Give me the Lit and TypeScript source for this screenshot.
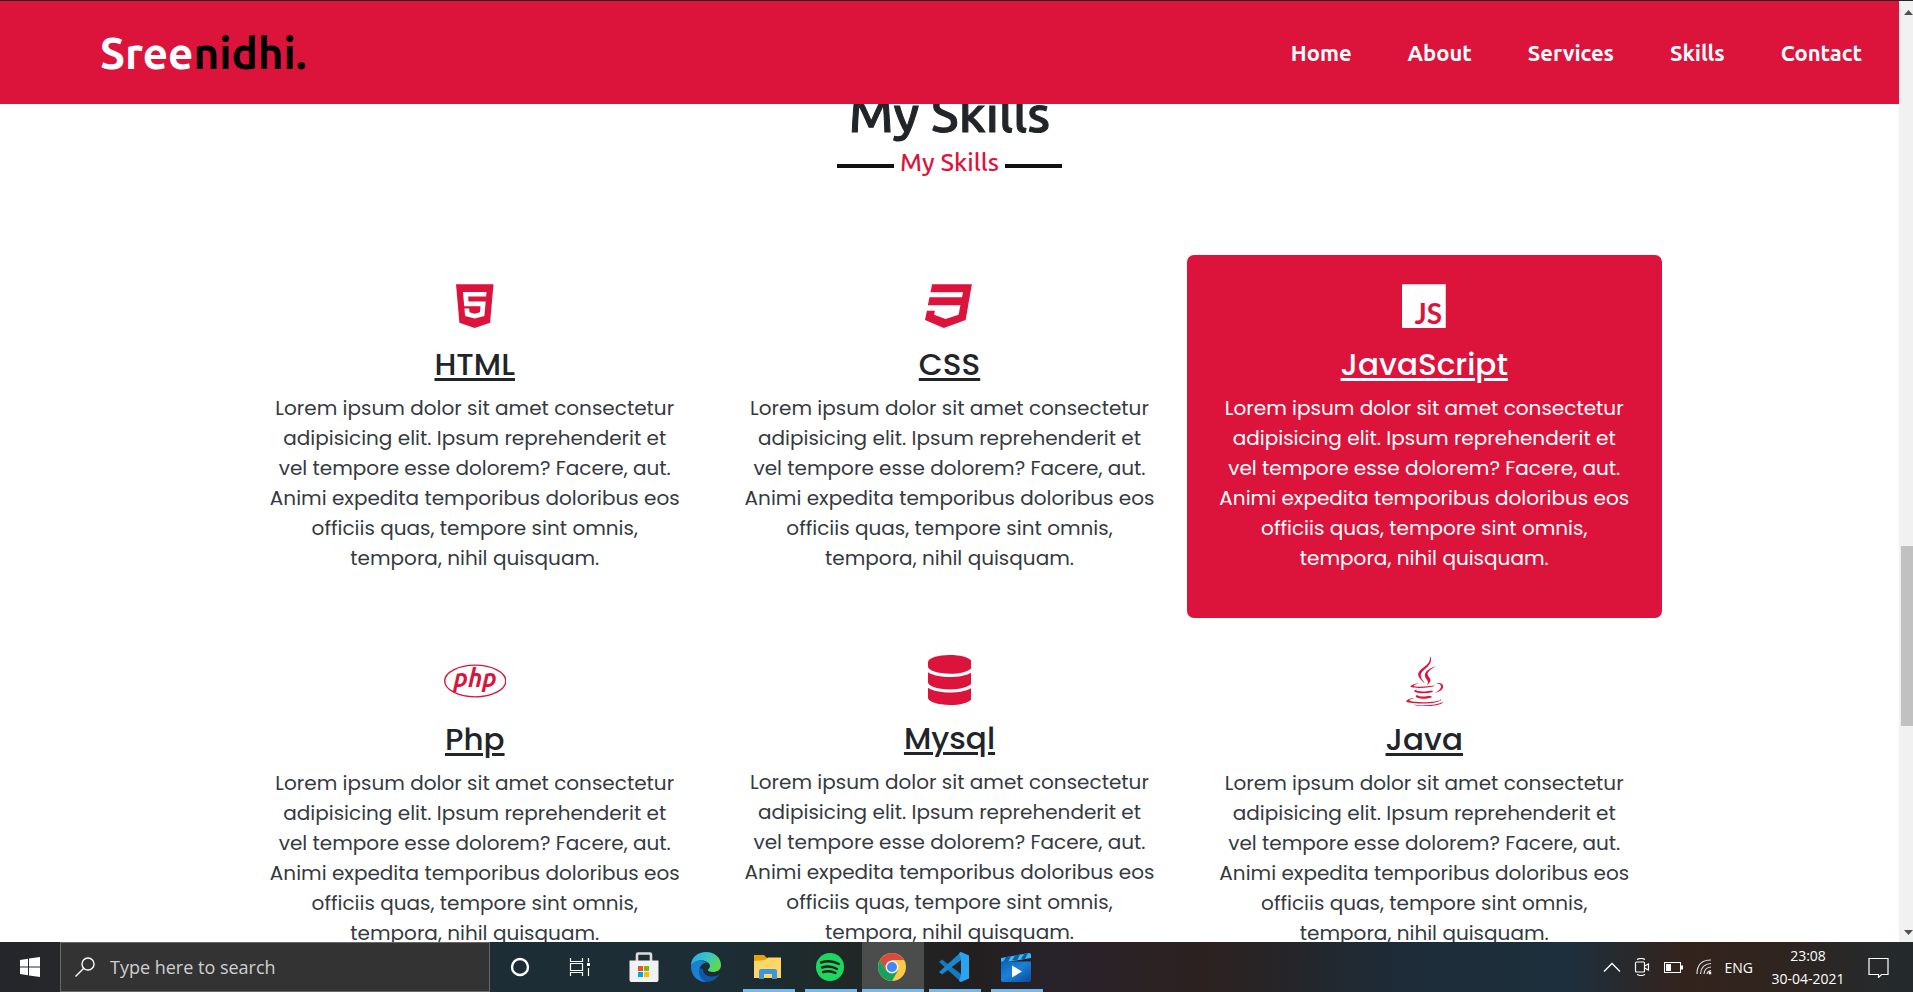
import { LitElement, html, svg, css, nothing, TemplateResult } from "lit";
import { customElement, property } from "lit/decorators.js";
import { classMap } from "lit/directives/class-map.js";

const skillIcons: Record<string, TemplateResult> = {
  html: html`<svg viewBox="0 0 384 512" height="50" aria-hidden="true"><path fill="currentColor" d="M0 32l34.9 395.8L191.5 480l157.6-52.2L384 32H0zm308.2 127.9H124.4l4.1 49.4h175.6l-13.6 148.4-97.9 27v.3h-1.1l-98.7-27.3-6-75.8h47.7L138 320l53.5 14.5 53.7-14.5 6-62.2H84.3L71.5 112.2h241.1l-4.4 47.7z"/></svg>`,
  css: html`<svg viewBox="0 0 512 512" height="50" aria-hidden="true"><path fill="currentColor" d="M480 32l-64 368-223.3 80L0 400l19.6-94.8h82l-8 40.6L210 390.2l134.1-44.4 18.8-97.1H29.5l16-82h333.7l10.5-52.7H56.3l16.3-82H480z"/></svg>`,
  js: html`<svg viewBox="0 0 448 512" height="50" aria-hidden="true"><path fill="currentColor" d="M0 32h448v448H0z"/><text x="270" y="442" text-anchor="middle" font-family="Lato, sans-serif" font-weight="700" font-size="286" fill="#dc143c">JS</text></svg>`,
  php: html`<svg viewBox="0 0 640 512" height="50" aria-hidden="true"><ellipse cx="320" cy="256" rx="313" ry="162" fill="none" stroke="currentColor" stroke-width="14"/><text x="318" y="318" text-anchor="middle" font-family="Ubuntu, sans-serif" font-weight="700" font-style="italic" font-size="256" fill="currentColor">php</text></svg>`,
  db: html`<svg viewBox="0 0 448 512" height="50" aria-hidden="true"><path fill="currentColor" d="M448 73.143v45.714C448 159.143 347.667 192 224 192S0 159.143 0 118.857V73.143C0 32.857 100.333 0 224 0s224 32.857 224 73.143zM448 176v102.857C448 319.143 347.667 352 224 352S0 319.143 0 278.857V176c48.125 33.143 136.208 48.572 224 48.572S399.874 209.143 448 176zm0 160v102.857C448 479.143 347.667 512 224 512S0 479.143 0 438.857V336c48.125 33.143 136.208 48.572 224 48.572S399.874 369.143 448 336z"/></svg>`,
  java: html`<svg viewBox="0 0 384 512" height="50" aria-hidden="true"><path fill="currentColor" d="M277.74 312.9c9.8-6.7 23.4-12.5 23.4-12.5s-38.7 7-77.2 10.2c-47.1 3.9-97.7 4.7-123.1 1.3-60.1-8 33-30.1 33-30.1s-36.1-2.4-80.6 19c-52.5 25.4 130 37 224.5 12.1zm-85.4-32.1c-19-42.7-83.1-80.2 0-145.8C296 53.2 242.84 0 242.84 0c21.5 84.5-75.6 110.1-110.7 162.6-23.9 35.9 11.7 74.4 60.2 118.2zm114.6-176.2c.1 0-175.2 43.8-91.5 140.2 24.7 28.4-6.5 54-6.5 54s62.7-32.4 33.9-72.9c-26.9-37.8-47.5-56.6 64.1-121.3zm-6.1 270.5a12.19 12.19 0 0 1-2 2.6c128.3-33.7 81.1-118.9 19.8-97.3a17.33 17.33 0 0 0-8.2 6.3 70.45 70.45 0 0 1 11-3c31-6.5 75.5 41.5-20.6 91.4zM348 437.4s14.5 11.9-15.9 21.2c-57.9 17.5-240.8 22.8-291.6.7-18.3-7.9 16-19 26.8-21.3 11.2-2.4 17.7-2 17.7-2-20.3-14.3-131.3 28.1-56.4 40.2C232.84 509.4 401 461.3 348 437.4zM124.44 396c-78.7 22 47.9 67.4 148.1 24.5a185.89 185.89 0 0 1-28.2-13.8c-44.7 8.5-65.4 9.1-106 4.5-33.5-3.8-13.9-15.2-13.9-15.2zm179.8 97.2c-78.7 14.8-175.8 13.1-233.3 3.6 0-.1 11.8 9.7 72.4 13.6 92.2 5.9 233.8-3.3 237.1-46.9 0 0-6.4 16.5-76.2 29.7zM260.64 353c-59.2 11.4-93.5 11.1-136.8 6.6-33.5-3.5-11.6-19.7-11.6-19.7-86.8 28.8 48.2 61.4 169.5 25.9a60.37 60.37 0 0 1-21.1-12.8z"/></svg>`,
};

const skills = [
  { icon: "html", name: "HTML", brand: true },
  { icon: "css", name: "CSS", brand: true },
  { icon: "js", name: "JavaScript", brand: true, active: true },
  { icon: "php", name: "Php", brand: true },
  { icon: "db", name: "Mysql" },
  { icon: "java", name: "Java", brand: true },
];

const blurb = [
  "Lorem ipsum dolor sit amet consectetur",
  "adipisicing elit. Ipsum reprehenderit et",
  "vel tempore esse dolorem? Facere, aut.",
  "Animi expedita temporibus doloribus eos",
  "officiis quas, tempore sint omnis,",
  "tempora, nihil quisquam.",
];

@customElement("skill-card")
class SkillCard extends LitElement {
  @property() icon = "";
  @property() name = "";
  @property({ type: Boolean }) brand = false;
  @property({ type: Boolean }) active = false;

  static styles = css`
    :host { display: block; }
    .card {
      padding: 25px 20px 45px;
      border-radius: 7px;
      text-align: center;
      color: #212529;
      font-family: Poppins, Inter, sans-serif;
    }
    .icon { display: flex; justify-content: center; color: #dc143c; }
    .brand { padding-top: 1px; }
    h3 {
      margin: 14px 0 10px;
      font-size: 31px;
      line-height: 38px;
      font-weight: 500;
      text-decoration: underline;
      text-decoration-thickness: 3px;
      text-underline-offset: 3px;
    }
    p { margin: 0; color: #343a40; font-size: 20px; line-height: 30px; font-weight: 400; white-space: nowrap; }
    .active { background: #dc143c; color: #fff; }
    .active .icon, .active p { color: #fff; }
  `;

  render() {
    return html`<article class=${classMap({ card: true, active: this.active })}>
      <div class=${classMap({ icon: true, brand: this.brand })}>${skillIcons[this.icon]}</div>
      <h3>${this.name}</h3>
      <p>${blurb.map((line, i) => html`${i ? html`<br>` : nothing}${line}`)}</p>
    </article>`;
  }
}

const apps = [
  { label: "Cortana", art: svg`<circle cx="14" cy="15" r="8" fill="none" stroke="#fff" stroke-width="2.4"/>` },
  { label: "Task View", art: svg`<path d="M2.500 6v3.500h12V6M2.500 24v-3.500h12V24M2.500 11.500h12v7h-12zM20.500 6v4M20.500 16v8" fill="none" stroke="#fff" stroke-width="1.200"/><path d="M19 11h3v3h-3z" fill="#fff"/>` },
  { label: "Microsoft Store", art: svg`<path d="M7 9V2.500Q7 1.500 8 1.500H20Q21 1.500 21 2.500V9" fill="none" stroke="#ddd" stroke-width="2.600"/><path d="M-0.500 8.500H28.500V28Q28.500 30 26.500 30H1.500Q-0.500 30 -0.500 28Z" fill="#f2f2f2"/><path d="M8 14h5v5h-5z" fill="#f25022"/><path d="M14 14h5v5h-5z" fill="#7fba00"/><path d="M8 20h5v5h-5z" fill="#00a4ef"/><path d="M14 20h5v5h-5z" fill="#ffb900"/>` },
  { label: "Edge", art: svg`<defs><linearGradient id="eg" x1="0" y1="0" x2="1" y2="0.500"><stop offset="0" stop-color="#2aa8e0"/><stop offset="0.500" stop-color="#36c3d0"/><stop offset="1" stop-color="#5fda4f"/></linearGradient></defs><g transform="translate(-1 0)"><path d="M0 14A15 15 0 0 0 15 30C21 30 26 27 28.500 22Q26 24.500 21 24.500C16 24.500 12 22 12 17Z" fill="#0f58a8"/><path d="M0 14C0 5 7 0 15 0c9 0 15 6 15 13 0 5-4 7-8 7-3 0-5-1-5-2 0-1 2-1.500 2-4 0-3-4-5.500-8-5.500C5 8.500 1 11 0 14Z" fill="url(#eg)"/><path d="M0 14c1-3 4-5.500 9-5.500 3 0 5 1 7 2-4 0-8 4-8 9 0 5 3 9 7 10.500C6 30 0 23 0 14Z" fill="#1b7fd4"/></g>` },
  { label: "File Explorer", open: true, art: svg`<path d="M0 3h10l3 3v8H0z" fill="#e8a00c"/><path d="M0 9l11-1 3-2.500h13V26H0z" fill="#ffd666"/><path d="M5 27V19q0-2 2-2H21q2 0 2 2v8H18V22H10v5z" fill="#3c96dc"/>` },
  { label: "Spotify", open: true, art: svg`<g transform="translate(-1 0)"><circle cx="15" cy="15" r="14" fill="#1ed760"/><path d="M6 10.500Q15.500 7.500 24 12M7 15.500Q15 13 22 17M8 20Q15 18 20.500 21" fill="none" stroke="#17241d" stroke-width="2.400" stroke-linecap="round"/></g>` },
  { label: "Chrome", open: true, active: true, art: svg`<g transform="translate(-1 0)"><circle cx="15" cy="15" r="14" fill="#fbc943"/><path d="M2.900 8A14 14 0 0 1 27.100 8H15L9 18.500Z" fill="#db4a3f"/><path d="M2.900 8A14 14 0 0 0 15 29L21 18.500L9 18.500Z" fill="#18a05f"/><circle cx="15" cy="15" r="6.500" fill="#f1f1f1"/><circle cx="15" cy="15" r="5" fill="#4688f1"/></g>` },
  { label: "Visual Studio Code", open: true, art: svg`<g transform="translate(-1 0)"><path d="M0 10l3-2.500 19 14.500v8z" fill="#1479bd"/><path d="M0 20l3 2.500L22 8V0z" fill="#1b86ce"/><path d="M22 0l8 3.500v23L22 30l-2-1 2-6V7l-2-6z" fill="#2ba3ee"/></g>` },
  { label: "Movies and TV", open: true, art: svg`<defs><linearGradient id="mv" x1="0" y1="0" x2="1" y2="1"><stop offset="0" stop-color="#0f5fb8"/><stop offset="0.450" stop-color="#1b82d8"/><stop offset="1" stop-color="#0a4a9a"/></linearGradient></defs><g transform="translate(-1 0)"><path d="M0 6L28 1q2 0 2 2v3L0 11z" fill="#38bdf0"/><path d="M5 5l5-1-3 6H2zM14 3.500l5-1-3 6h-5zM23 2l4-1-3 6h-4z" fill="#125ea8"/><path d="M0 9.500H30V28q0 2-2 2H2q-2 0-2-2z" fill="url(#mv)"/><path d="M11 13.500v12l10-6z" fill="#fff"/></g>` },
];

@customElement("task-bar")
class TaskBar extends LitElement {
  static styles = css`
    :host { display: block; font-family: "Segoe UI", "Open Sans", sans-serif; color: #fff; }
    .bar {
      display: flex;
      height: 50px;
      background: linear-gradient(90deg, #24262b 0, #27272a 4%, #1c2d35 25%, #1c2d35 38%, #1f2927 44%, #231f1f 51%, #28222b 55%, #2c211f 63%, #24262b 68%, #1d2c38 73%, #1d2f3c 82%, #33231c 88%, #2f241f 93%, #262a2b 98%, #24292b 100%);
    }
    button { margin: 0; padding: 0; border: 0; background: none; color: inherit; font: inherit; }
    .start { display: grid; place-items: center; width: 60px; }
    .search {
      box-sizing: border-box;
      display: flex;
      align-items: center;
      gap: 15px;
      width: 430px;
      padding-left: 14px;
      border: 1px solid #686868;
      background: #333;
    }
    .search input { flex: 1; min-width: 0; border: 0; padding: 0; outline: 0; background: none; color: #fff; font: inherit; font-size: 18px; }
    .search input::placeholder { color: #cfcfcf; opacity: 1; }
    .apps { display: flex; }
    .app { position: relative; display: grid; place-items: center; width: 62px; }
    .app svg { overflow: visible; }
    .open::after { content: ""; position: absolute; bottom: 0; left: 5px; right: 5px; height: 3px; background: #76b9ed; }
    .current { background: #4b4d4c; }
    .current::after { left: 0; right: 0; }
    .tray { display: flex; align-items: center; gap: 13px; margin-left: auto; padding-right: 24px; font-size: 14px; }
    .tray svg { display: block; }
    .clock { width: 80px; text-align: center; line-height: 23px; margin: 0 7px 0 2px; }
  `;

  render() {
    return html`<footer class="bar">
      <button class="start" aria-label="Start">
        <svg width="20" height="20" viewBox="0 0 20 20"><path fill="#fff" d="M0 3L8 1.800V9.500H0zM9 1.600L20 0V9.500H9zM0 10.500H8V18.200L0 17zM9 10.500H20V20L9 18.400z"/></svg>
      </button>
      <label class="search">
        <svg width="20" height="20" viewBox="0 0 20 20" role="img" aria-label="Search"><circle cx="13" cy="7" r="6" fill="none" stroke="#fff" stroke-width="1.400"/><path d="M8.500 11.500L0.500 19.500" stroke="#fff" stroke-width="1.400"/></svg>
        <input type="text" placeholder="Type here to search">
      </label>
      <div class="apps">
        ${apps.map((a) => html`<button class=${classMap({ app: true, open: !!a.open, current: !!a.active })} aria-label=${a.label}><svg width="30" height="30" viewBox="0 0 30 30">${a.art}</svg></button>`)}
      </div>
      <div class="tray">
        <button aria-label="Show hidden icons"><svg width="18" height="18" viewBox="0 0 18 18"><path d="M1 13.500L9 5.500L17 13.500" fill="none" stroke="#fff" stroke-width="1.300"/></svg></button>
        <button aria-label="Meet now"><svg width="16" height="18" viewBox="0 0 16 18" fill="none" stroke="#fff" stroke-width="1.200"><rect x="1.500" y="4" width="9" height="10" rx="1"/><path d="M10.500 8l4-2v6l-4-2M3 1.500Q7 -0.500 11 1.500M3 16.500Q7 18.500 11 16.500"/></svg></button>
        <button aria-label="Battery"><svg width="20" height="18" viewBox="0 0 20 18"><rect x="1.500" y="4.500" width="16" height="10" fill="none" stroke="#fff"/><path d="M3 6h5v7H3zM18 7.500h2v4h-2z" fill="#fff"/></svg></button>
        <button aria-label="Network"><svg width="16" height="18" viewBox="0 0 16 18" fill="none" stroke="#ddd" stroke-width="1.200"><path d="M1 16Q1 2 15 2M4.500 16Q5 6 15 5.500M8 16Q8.500 9.500 15 9M11 16Q11.500 13 15 12.500"/><circle cx="14" cy="15" r="1.400" fill="#fff" stroke="none"/></svg></button>
        <button>ENG</button>
        <div class="clock"><time>23:08</time><br><time>30-04-2021</time></div>
        <button aria-label="Notifications"><svg width="21" height="21" viewBox="0 0 21 21"><path d="M1 1.500H20V17.500H13.500L10.500 20.500V17.500H1z" fill="none" stroke="#fff" stroke-width="1.200"/></svg></button>
      </div>
    </footer>`;
  }
}

@customElement("app-root")
class AppRoot extends LitElement {
  static styles = css`
    :host {
      display: flex;
      flex-direction: column;
      height: 100vh;
      overflow: hidden;
      background: #fff;
      font-family: Ubuntu, "Noto Sans", sans-serif;
    }
    .window { display: flex; flex: 1; min-height: 0; border-top: 1px solid #262626; }
    .page { display: flex; flex-direction: column; flex: 1; min-width: 0; }
    .header {
      display: flex;
      flex: none;
      align-items: center;
      justify-content: space-between;
      height: 103px;
      padding: 0 37px 0 100px;
      background: #dc143c;
    }
    a { text-decoration: none; }
    .logo { color: #fff; font-size: 44px; font-weight: 700; }
    .logo span { color: #000; }
    .nav { display: flex; gap: 56px; }
    .nav a { color: #fff; font-size: 22px; font-weight: 700; }
    .main { flex: 1; min-height: 0; overflow: hidden; }
    .heading { margin-top: -21px; margin-bottom: 74px; text-align: center; }
    h2 { margin: 0; color: #212529; font-size: 51px; line-height: 60px; font-weight: 500; -webkit-text-stroke: 1px #212529; }
    .sub {
      display: flex;
      align-items: center;
      justify-content: center;
      gap: 6px;
      color: #dc143c;
      font-size: 25px;
      line-height: 38px;
      font-weight: 500;
    }
    .sub::before, .sub::after { content: ""; width: 57px; height: 4px; margin-top: 8px; background: #111; }
    .grid { display: grid; grid-template-columns: repeat(3, 1fr); row-gap: 12px; width: 75%; margin: 0 auto; }
    .scroll {
      display: flex;
      flex-direction: column;
      justify-content: space-between;
      width: 14px;
      overflow: hidden;
      background: #f1f1f1;
    }
    .scroll svg { flex: none; }
    .track { display: flex; flex-direction: column; flex: 1; padding-left: 2px; }
    .before { flex: 528; }
    .thumb { flex: 180; background: #c1c1c1; }
    .after { flex: 199; }
  `;

  render() {
    return html`
      <div class="window">
        <div class="page">
          <header class="header">
            <a class="logo" href="#home">Sree<span>nidhi.</span></a>
            <nav class="nav">
              ${["Home", "About", "Services", "Skills", "Contact"].map((n) => html`<a href="#${n.toLowerCase()}">${n}</a>`)}
            </nav>
          </header>
          <main class="main">
            <div class="heading">
              <h2>My Skills</h2>
              <div class="sub">My Skills</div>
            </div>
            <section class="grid">
              ${skills.map((s) => html`<skill-card icon=${s.icon} name=${s.name} ?brand=${!!s.brand} ?active=${!!s.active}></skill-card>`)}
            </section>
          </main>
        </div>
        <div class="scroll" aria-hidden="true">
          <svg width="17" height="17" viewBox="0 0 17 17"><path d="M5 14h9L9.500 9z" fill="#505050"/></svg>
          <div class="track"><div class="before"></div><div class="thumb"></div><div class="after"></div></div>
          <svg width="17" height="17" viewBox="0 0 17 17"><path d="M5 5h9L9.500 10z" fill="#505050"/></svg>
        </div>
      </div>
      <task-bar></task-bar>
    `;
  }
}
